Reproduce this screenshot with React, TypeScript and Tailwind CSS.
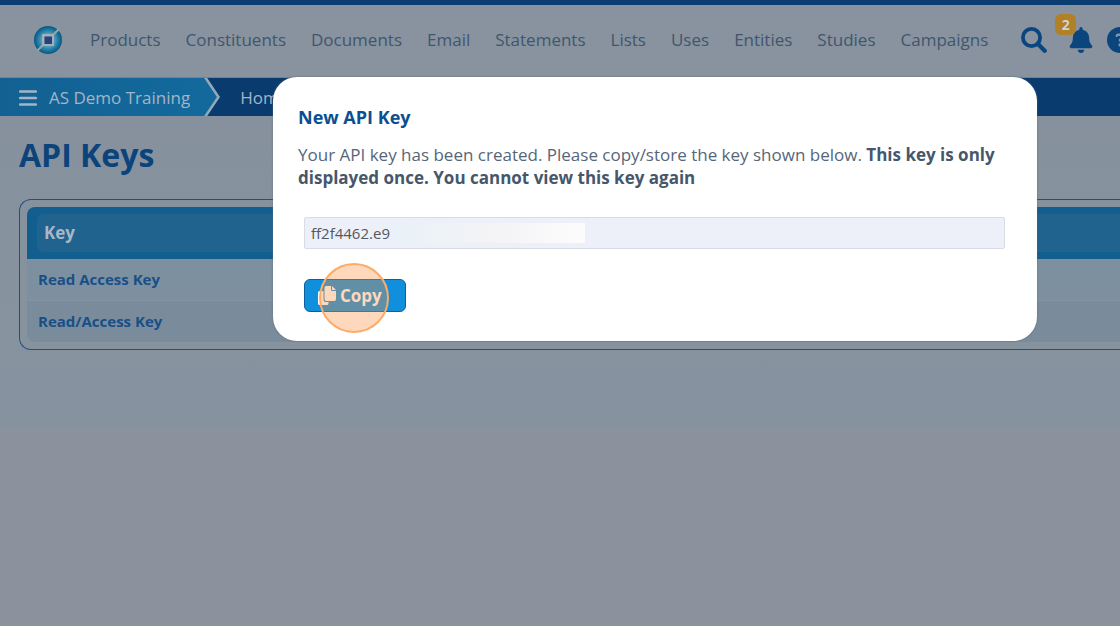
import { FaBell } from "react-icons/fa";
import { FaCircleQuestion } from "react-icons/fa6";

const NAV = [
  "Products",
  "Constituents",
  "Documents",
  "Email",
  "Statements",
  "Lists",
  "Uses",
  "Entities",
  "Studies",
  "Campaigns",
];

const KEYS = ["Read Access Key", "Read/Access Key"];

function Logo() {
  return (
    <svg viewBox="0 0 28 28" className="block size-7" aria-hidden="true">
      <defs>
        <radialGradient id="ring">
          <stop offset="0.4" stopColor="#5fa3bd" />
          <stop offset="0.75" stopColor="#1b7aa3" />
          <stop offset="1" stopColor="#0b5580" />
        </radialGradient>
      </defs>
      <circle cx="14" cy="14" r="14" fill="url(#ring)" />
      <path d="M3.500 24.500L9 19M19 9L25 3" stroke="#8fa5b1" strokeWidth="2" />
      <rect x="8" y="8" width="12" height="12" fill="#a3b0ba" />
      <rect x="10.500" y="10.500" width="7.500" height="7.500" fill="#28407d" />
    </svg>
  );
}

function SearchIcon() {
  return (
    <svg viewBox="0 0 26 26" className="size-[26px]" fill="none" stroke="currentColor" aria-hidden="true">
      <circle cx="10.500" cy="10.500" r="8.600" strokeWidth="3.800" />
      <path d="M17 17L23.700 23.700" strokeWidth="4.300" strokeLinecap="round" />
    </svg>
  );
}

function CopyIcon() {
  return (
    <svg viewBox="0 0 18 19" className="h-[19px] w-[18px]" fill="currentColor" aria-hidden="true">
      <path d="M1.500 5H5.500V13.500A2.500 2.500 0 0 0 8 16H10.500V17.500A1.500 1.500 0 0 1 9 19H1.500A1.500 1.500 0 0 1 0 17.500V6.500A1.500 1.500 0 0 1 1.500 5Z" />
      <path d="M8.200 0H13V3.800A1.200 1.200 0 0 0 14.200 5H18V13.300A1.700 1.700 0 0 1 16.300 15H8.200A1.700 1.700 0 0 1 6.500 13.300V1.700A1.700 1.700 0 0 1 8.200 0Z" />
      <path d="M14 0L18 4H14Z" />
    </svg>
  );
}

function Header() {
  return (
    <header className="flex h-[73px] items-center overflow-hidden border-b border-[#76818c] bg-[#88939f] pb-0.5 pl-[34px]">
      <a href="#home" aria-label="Home page" className="mr-7 shrink-0">
        <Logo />
      </a>
      <nav className="flex shrink-0 gap-[25px] text-[17px] leading-6 text-[#40566d]">
        {NAV.map((item) => (
          <a key={item} href={"#" + item.toLowerCase()}>
            {item}
          </a>
        ))}
      </nav>
      <div className="ml-[33px] flex shrink-0 items-center gap-[21px] text-[#0b457e]">
        <button type="button" aria-label="Search">
          <SearchIcon />
        </button>
        <button type="button" aria-label="Notifications" className="relative">
          <FaBell className="size-[26px]" />
          <span className="absolute -top-[13px] -left-[13px] flex size-[21px] items-center justify-center rounded-md bg-[#b08126] text-[14px] leading-none font-bold text-[#d0d3d3]">
            2
          </span>
        </button>
        <button type="button" aria-label="Help" className="-ml-2">
          <FaCircleQuestion className="size-[26px]" />
        </button>
      </div>
    </header>
  );
}

function Breadcrumb() {
  return (
    <div className="flex h-[38px] items-stretch bg-[#0a3b6e] text-[17px] text-[#a3b5c6]">
      <button
        type="button"
        className="flex items-center gap-3 bg-linear-to-r from-[#126192] to-[#13699c] pt-px pl-[19px]"
      >
        <svg viewBox="0 0 18 16" className="h-4 w-[18px]" aria-hidden="true">
          <path
            d="M1 1.500H17M1 8H17M1 14.500H17"
            stroke="currentColor"
            strokeWidth="2.400"
            strokeLinecap="round"
          />
        </svg>
        AS Demo Training
      </button>
      <svg viewBox="0 0 30 38" className="h-[38px] w-[30px]" aria-hidden="true">
        <path d="M0 0H15L28 19L15 38H0Z" fill="#13699c" />
        <path d="M15 -1L28.500 19L15 39" fill="none" stroke="#93a9bb" strokeWidth="2.600" />
      </svg>
      <a href="#home" className="ml-5 flex items-center pt-px">
        Home
      </a>
    </div>
  );
}

function KeyTable() {
  return (
    <div className="-mr-5 rounded-l-xl border border-r-0 border-[#254f80] py-[7px] pl-[7px]">
      <table className="w-full border-separate border-spacing-0 text-left font-bold">
        <thead>
          <tr>
            <th className="h-[52px] rounded-tl-lg bg-[#115e8f] py-[7px] pl-[10px] text-[17px] text-[#a9b7c5]">
              <div className="flex h-[38px] items-center rounded-l-md bg-[#20638f] pl-[7px]">Key</div>
            </th>
          </tr>
        </thead>
        <tbody className="text-[15px] text-[#184f88]">
          {KEYS.map((name, i) => (
            <tr key={name}>
              <td
                className={
                  i === 0
                    ? "h-[42px] border-b border-[#8494a3] bg-[#7d90a0] pl-[11px]"
                    : "h-[41px] rounded-bl-lg bg-[#7a8c9b] pl-[11px]"
                }
              >
                <a href="#key">{name}</a>
              </td>
            </tr>
          ))}
        </tbody>
      </table>
    </div>
  );
}

function NewKeyDialog() {
  return (
    <div className="absolute inset-0 flex items-start pt-[77px] pr-[83px] pl-[273px]">
      <section
        role="dialog"
        aria-labelledby="dialog-title"
        className="w-full rounded-3xl bg-white px-[25px] pt-7 pb-[29px] shadow-[0_0_2px_#5b6775]"
      >
        <h2 id="dialog-title" className="text-[18px] leading-6 font-bold text-[#0b4f92]">
          New API Key
        </h2>
        <p className="mt-3.5 text-[17px] leading-[23px] text-[#56667a]">
          Your API key has been created. Please copy/store the key shown below.{" "}
          <strong className="font-bold text-[#46576c]">
            This key is only displayed once. You cannot view this key again
          </strong>
        </p>
        <div className="relative mt-7 mr-[7px] ml-1.5">
          <input
            readOnly
            aria-label="API key"
            defaultValue="ff2f4462.e9"
            className="block h-8 w-full rounded-xs border border-[#d8dce4] bg-[#edf0f9] px-1.5 text-[15px] text-[#54585e] outline-none"
          />
          <div className="absolute top-1.5 left-[90px] h-5 w-[191px] bg-linear-to-r from-[#e8f2f8] via-[#f3f3f5] to-[#fcfcfd]" />
        </div>
        <div className="relative mt-[30px] ml-1.5 w-fit">
          <button
            type="button"
            className="flex h-[33px] w-[102px] items-center gap-1 rounded-md border border-[#0b609c] bg-[#1090dc] pl-[13px] text-[17px] font-bold text-white"
          >
            <CopyIcon />
            Copy
          </button>
          <span className="pointer-events-none absolute -top-4 left-[15px] size-[70px] rounded-full border-2 border-[#fdab66] bg-[#f98f40]/35" />
        </div>
      </section>
    </div>
  );
}

export default function App() {
  return (
    <div className="relative min-h-screen overflow-hidden bg-[#8b919d] font-['Open_Sans',sans-serif]">
      <div className="h-[5px] bg-[#0a3e73]" />
      <Header />
      <Breadcrumb />
      <main className="bg-linear-to-b from-[#87919e] to-[#86939f] pt-4 pr-5 pb-20 pl-[19px]">
        <h1 className="mb-[22px] text-[32px] leading-[45px] font-bold text-[#0b437b]">API Keys</h1>
        <KeyTable />
      </main>
      <NewKeyDialog />
    </div>
  );
}
